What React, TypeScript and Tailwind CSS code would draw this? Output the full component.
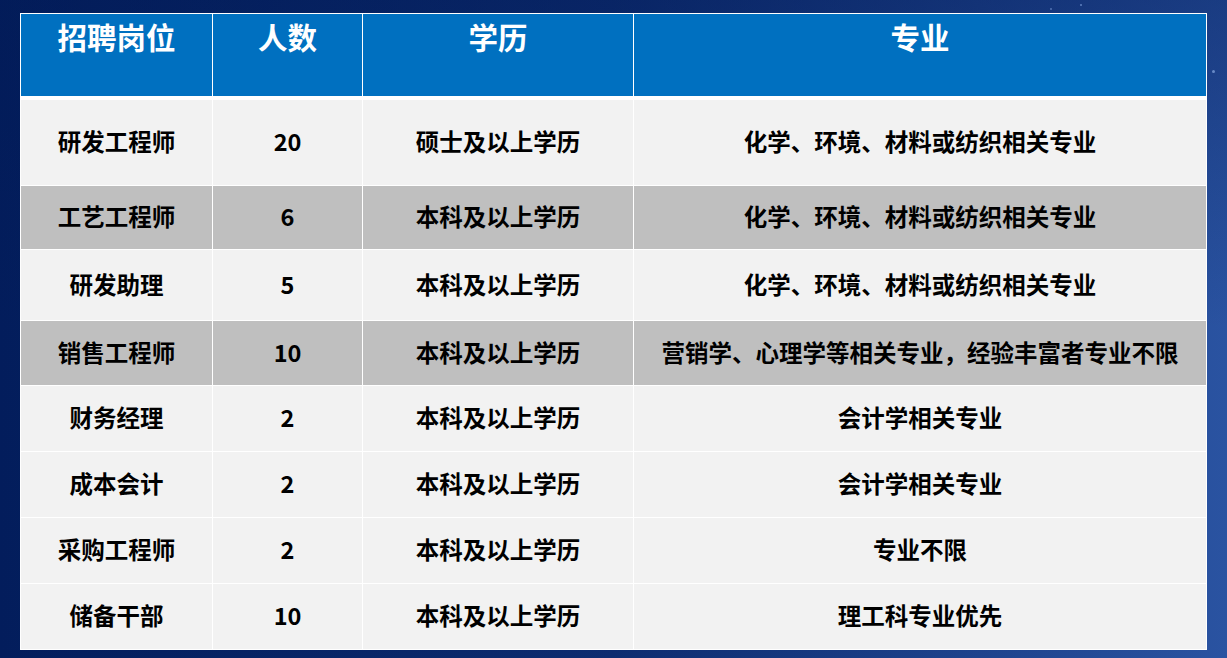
import React from "react";

const rows: { name: string; count: string; edu: string; major: string; dark?: boolean; h: string }[] = [
  { name: "研发工程师", count: "20", edu: "硕士及以上学历", major: "化学、环境、材料或纺织相关专业", h: "h-[85px]" },
  { name: "工艺工程师", count: "6", edu: "本科及以上学历", major: "化学、环境、材料或纺织相关专业", dark: true, h: "h-[63px]" },
  { name: "研发助理", count: "5", edu: "本科及以上学历", major: "化学、环境、材料或纺织相关专业", h: "h-[70px]" },
  { name: "销售工程师", count: "10", edu: "本科及以上学历", major: "营销学、心理学等相关专业，经验丰富者专业不限", dark: true, h: "h-[64px]" },
  { name: "财务经理", count: "2", edu: "本科及以上学历", major: "会计学相关专业", h: "h-[65px]" },
  { name: "成本会计", count: "2", edu: "本科及以上学历", major: "会计学相关专业", h: "h-[65px]" },
  { name: "采购工程师", count: "2", edu: "本科及以上学历", major: "专业不限", h: "h-[65px]" },
  { name: "储备干部", count: "10", edu: "本科及以上学历", major: "理工科专业优先", h: "h-[65px]" },
];

const headers = ["招聘岗位", "人数", "学历", "专业"];

export default function App() {
  return (
    <div
      className="relative w-[1227px] h-[658px] overflow-hidden bg-gradient-to-r from-[#031d5c] via-[#0d2c70] to-[#2a53a1]"
      style={{ fontFamily: '"Noto Sans CJK SC", "Noto Sans", sans-serif' }}
    >
      <div className="absolute inset-0 bg-gradient-to-b from-[#021a55]/40 via-transparent to-transparent" />
      <div className="absolute left-[1080px] top-[4px] w-[2px] h-[2px] rounded-full bg-[#8fb2ec]/60" />
      <div className="absolute left-[1212px] top-[70px] w-[3px] h-[3px] rounded-full bg-[#9bbcf0]/60" />
      <div className="absolute left-[1050px] top-[8px] w-[2px] h-[2px] rounded-full bg-[#8fb2ec]/50" />
      <div className="relative pt-[13px] pl-[20px]">
        <div className="w-[1187px] bg-white p-px flex flex-col gap-px">
          <div className="grid grid-cols-[191px_149px_270px_572px] gap-px h-[82px] mb-[3px]">
            {headers.map((h) => (
              <div key={h} className="bg-[#0070c0] text-white text-[29.5px] font-bold leading-[36px] text-center pt-[4px]">
                {h}
              </div>
            ))}
          </div>
          {rows.map((r, i) => (
            <div key={i} className={`grid grid-cols-[191px_149px_270px_572px] gap-px ${r.h}`}>
              {[r.name, r.count, r.edu, r.major].map((c, j) => (
                <div
                  key={j}
                  className={`${r.dark ? "bg-[#bfbfbf]" : "bg-[#f2f2f2]"} flex items-center justify-center pb-[1px] text-black text-[23.5px] font-bold`}
                >
                  {c}
                </div>
              ))}
            </div>
          ))}
        </div>
      </div>
    </div>
  );
}
